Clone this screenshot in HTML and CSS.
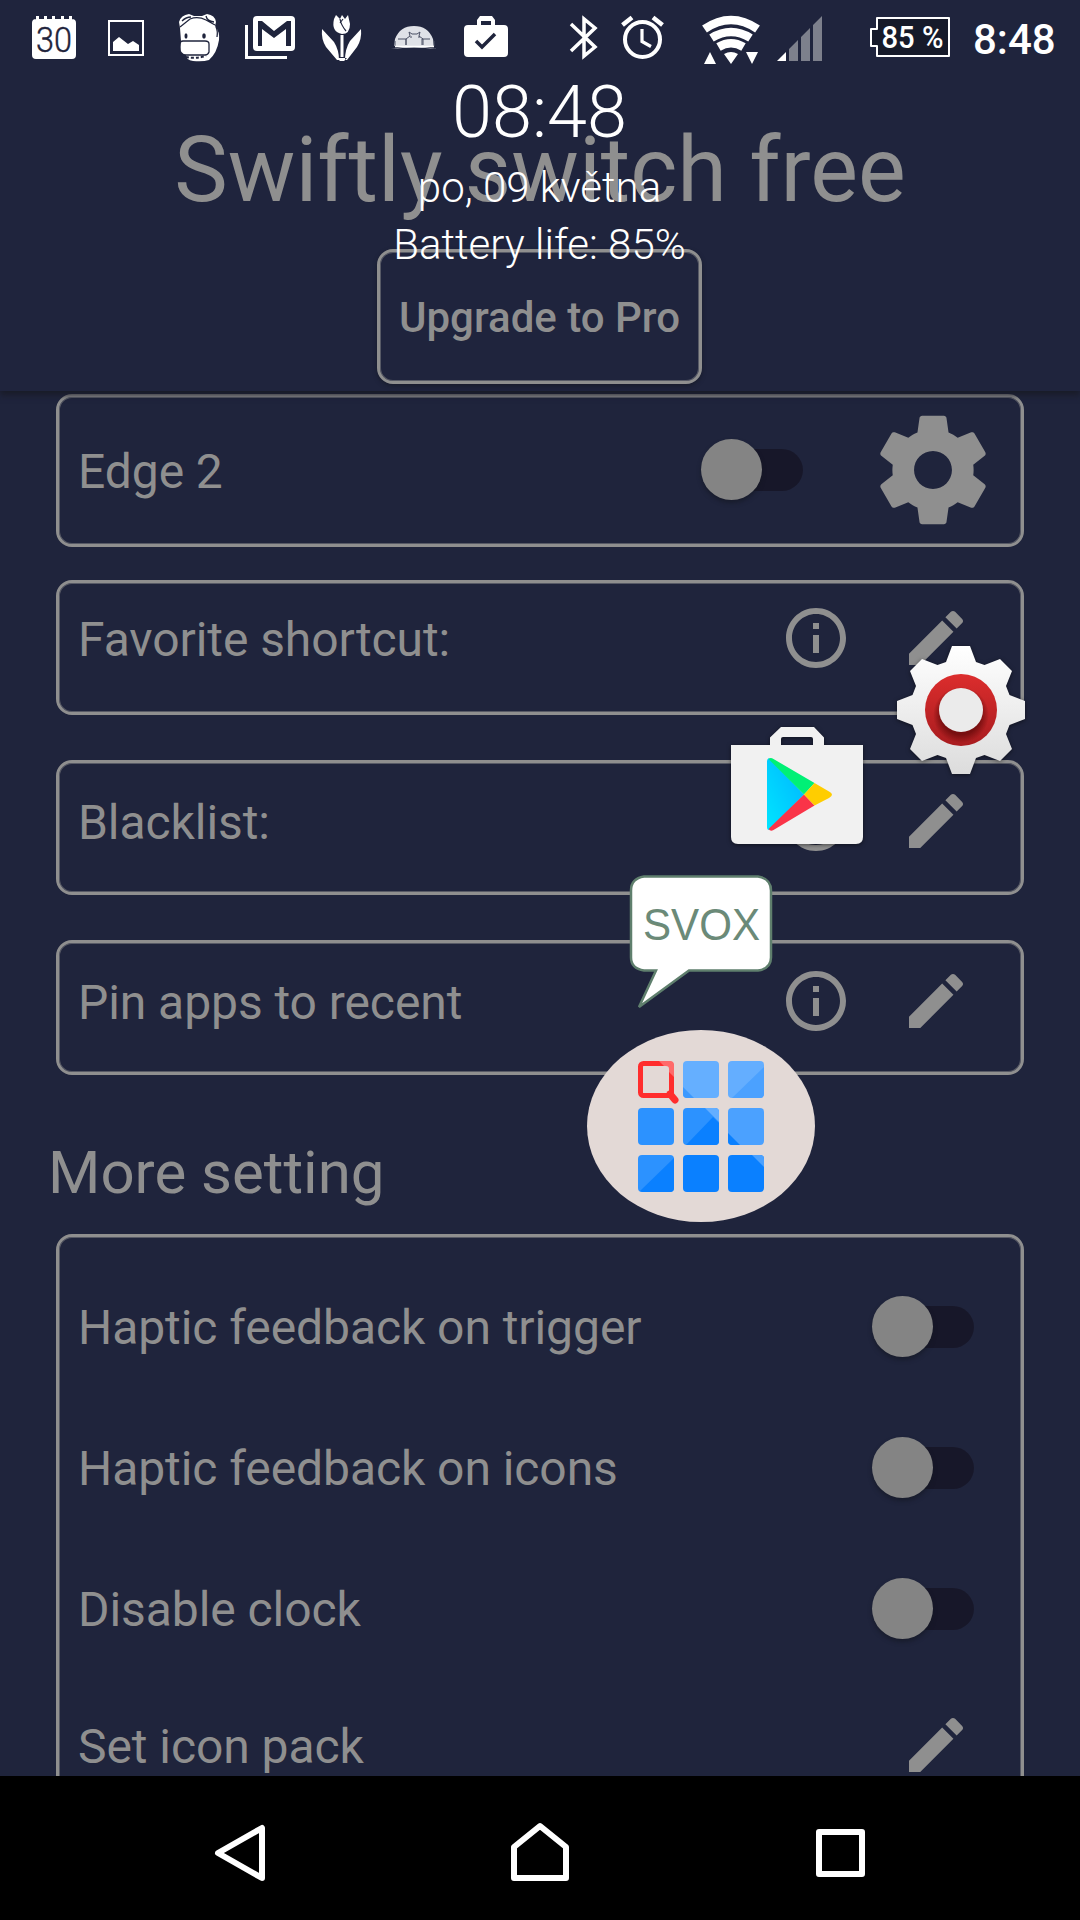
FILE: index.html
```html
<!DOCTYPE html>
<html lang="en">
<head>
    <meta charset="UTF-8">
    <meta name="viewport" content="width=device-width, initial-scale=1.0">
    <title>Swiftly switch free</title>
    <link rel="stylesheet" href="styles.css">
</head>
<body>
    <!-- shared icons -->
    <svg class="sprite" width="0" height="0">
        <symbol id="info" viewBox="0 0 24 24">
            <path d="M11 17h2v-6h-2v6zm1-15C6.48 2 2 6.48 2 12s4.48 10 10 10 10-4.48 10-10S17.52 2 12 2zm0 18c-4.41 0-8-3.59-8-8s3.59-8 8-8 8 3.59 8 8-3.59 8-8 8zM11 9h2V7h-2v2z"/>
        </symbol>
        <symbol id="pencil" viewBox="0 0 24 24">
            <path d="M3 17.25V21h3.75L17.81 9.94l-3.75-3.75L3 17.25zM20.71 7.04c.39-.39.39-1.02 0-1.41l-2.34-2.34c-.39-.39-1.02-.39-1.41 0l-1.83 1.83 3.75 3.75 1.83-1.83z"/>
        </symbol>
    </svg>

    <header class="app-header">
        <div class="status-bar">
            <div class="notifications">
                <svg width="72" height="76" viewBox="0 0 72 76">
                    <path fill="#fff" d="M18 19h36q4 0 4 4v32q0 4-4 4H18q-4 0-4-4V23q0-4 4-4zM18 16h3v4h-3zM26 16h3v4h-3zM34 16h3v4h-3zM43 16h3v4h-3zM51 16h3v4h-3z"/>
                    <text class="cal-day" x="18" y="52" textLength="36" lengthAdjust="spacingAndGlyphs">30</text>
                </svg>
                <svg width="72" height="76" viewBox="0 0 72 76">
                    <path fill="none" stroke="#fff" stroke-width="2" d="M19 21h34v34H19z"/>
                    <path fill="#fff" d="M23 51V42l6-5 9 7 5-3 6 4v6z"/>
                </svg>
                <svg width="72" height="76" viewBox="0 0 72 76">
                    <path fill="#fff" d="M18 28l-1-6q2-7 10-8l5 2h8l5-2q8 1 9 8l-1 4q5 6 4 14-2 13-10 20-6 2-16 1-7-1-7-6-6-2-6-8l1-6z"/>
                    <path fill="none" stroke="#1f243c" stroke-width="1.3" d="M18 27l10-8q8-3 16 1l9 5M20 21q4-4 9-4M44 16q1 5 8 6M54 27q2 4 1 10"/>
                    <ellipse cx="24" cy="36" rx="1.500" ry="2.800" fill="#1f243c"/>
                    <ellipse cx="42" cy="36" rx="1.800" ry="2.800" fill="#1f243c"/>
                    <path fill="none" stroke="#1f243c" stroke-width="1.300" d="M21 41h22q4 0 4 3v8q-1 3-4 3H21q-3 0-3-4v-7q0-3 3-3z"/>
                    <path fill="none" stroke="#1f243c" stroke-width="2" stroke-dasharray="3 2" d="M24 57q9 2 20-1"/>
                </svg>
                <svg width="72" height="76" viewBox="0 0 72 76">
                    <path fill="none" stroke="#fff" stroke-width="3" d="M12.500 25v32.500H53"/>
                    <rect x="19" y="16" width="42" height="35" rx="4" fill="#fff"/>
                    <path fill="#1f243c" d="M24 21h4l12 10 13-10h4v25h-5V29L40 38 28 29v17h-4z"/>
                </svg>
                <svg width="72" height="76" viewBox="0 0 72 76">
                    <path fill="#fff" d="M28 19l2-4 4 4 2-4 3 4 3-4 2 9q0 10-8 10-11-2-8-15zM16 29l12 13q5 8 5 18h-2L20 47q-5-8-4-18zM55 29L44 41q-5 8-5 19h2l10-13q5-8 4-18zM34.500 35h3v22h-3zM31 58h10l-3 3h-4z"/>
                    <path fill="none" stroke="#1f243c" stroke-width="1.200" d="M34 19q1 6 6 12M37 19l-3 4"/>
                </svg>
                <svg width="72" height="76" viewBox="0 0 72 76">
                    <path fill="#dfe1e7" d="M17 39Q22 26 36 26t19 13l1 7H16zM13 49q23-5 46 0-23-3-46 0z"/>
                    <path fill="none" stroke="#4b5065" stroke-width="1" d="M28 45v-6l4-3-1-4 3 2h5l3-2-1 4 4 3v6M20 39h8v6M52 39h-8v6M17 41v5M56 41v5M32 37h2M40 37h2"/>
                    <path stroke="#fff" stroke-width="1.500" d="M17 46.500h39"/>
                </svg>
                <svg width="72" height="76" viewBox="0 0 72 76">
                    <path fill="#fff" fill-rule="evenodd" d="M30 16h12l3 4v5h9q4 0 4 4v24q0 4-4 4H18q-4 0-4-4V29q0-4 4-4h9v-5zM31 21v4h10v-4z"/>
                    <path fill="none" stroke="#1f243c" stroke-width="3.500" d="M26 41l6 6 13-13"/>
                </svg>
            </div>
            <div class="system">
                <svg width="60" height="76" viewBox="0 0 60 76">
                    <path fill="none" stroke="#fff" stroke-width="3.500" d="M17 24l24 23-11 9V19l11 9L17 51"/>
                </svg>
                <svg width="80" height="76" viewBox="0 0 80 76">
                    <circle cx="28.500" cy="39.500" r="17.500" fill="none" stroke="#fff" stroke-width="4"/>
                    <path fill="none" stroke="#fff" stroke-width="3.200" d="M28 29v12.500l9 5"/>
                    <path fill="none" stroke="#fff" stroke-width="4.500" d="M8.500 25l9.500-7.500M39 17.500l9.500 7.500"/>
                </svg>
                <svg width="74" height="76" viewBox="0 0 74 76">
                    <g fill="none" stroke="#fff" stroke-width="8.500">
                        <path d="M10.500 29Q37 11 63.500 29"/>
                        <path d="M17.500 38Q37 26 56.500 38"/>
                        <path d="M24.500 47Q37 39.500 49.500 47"/>
                    </g>
                    <path fill="#fff" d="M30 54q7-4 14 0l-7 10zM16 52l6 12H10zM52 52h12l-6 12z"/>
                </svg>
                <svg width="93" height="76" viewBox="0 0 93 76">
                    <path fill="#fff" d="M9 61l9-9v9z"/>
                    <path fill="#7d808c" d="M21 49l9-9v21h-9zM33 37l9-9v33h-9zM45 25l9-9v45h-9z"/>
                </svg>
                <svg width="107" height="76" viewBox="0 0 107 76">
                    <path fill="#161a2a" stroke="#fff" stroke-width="2" stroke-linejoin="round" d="M16 18h72v38H16V46h-6V29h6z"/>
                    <text class="battery-text" x="20.500" y="48" textLength="62" lengthAdjust="spacingAndGlyphs">85 %</text>
                </svg>
                <span class="time">8:48</span>
            </div>
        </div>
        <h1 class="title">Swiftly switch free</h1>
        <button class="upgrade">Upgrade to Pro</button>
    </header>

    <main class="content">
        <div class="card card-edge">
            <span class="label">Edge 2</span>
            <span class="toggle"></span>
            <svg class="gear" viewBox="0 0 24 24"><path d="M19.430 12.980c.04-.32.07-.64.07-.98s-.03-.66-.07-.98l2.110-1.650c.19-.15.24-.42.12-.64l-2-3.460c-.12-.22-.39-.3-.61-.22l-2.490 1c-.52-.4-1.080-.73-1.690-.98l-.38-2.650C14.460 2.180 14.250 2 14 2h-4c-.25 0-.46.18-.49.42l-.38 2.650c-.61.25-1.170.59-1.690.98l-2.490-1c-.23-.09-.49 0-.61.22l-2 3.460c-.13.22-.07.49.12.64l2.110 1.650c-.04.32-.07.65-.07.98s.03.66.07.98l-2.110 1.650c-.19.15-.24.42-.12.64l2 3.460c.12.22.39.3.61.22l2.490-1c.52.4 1.080.73 1.690.98l.38 2.650c.03.24.24.42.49.42h4c.25 0 .46-.18.49-.42l.38-2.650c.61-.25 1.170-.59 1.690-.98l2.490 1c.23.09.49 0 .61-.22l2-3.460c.12-.22.07-.49-.12-.64l-2.110-1.650zM12 15.500c-1.930 0-3.500-1.570-3.500-3.500s1.570-3.500 3.500-3.500 3.500 1.570 3.500 3.500-1.570 3.500-3.500 3.500z"/></svg>
        </div>
        <div class="card card-favorite">
            <span class="label">Favorite shortcut:</span>
            <svg class="icon"><use href="#info"/></svg>
            <svg class="icon"><use href="#pencil"/></svg>
        </div>
        <div class="card">
            <span class="label">Blacklist:</span>
            <svg class="icon"><use href="#info"/></svg>
            <svg class="icon"><use href="#pencil"/></svg>
        </div>
        <div class="card">
            <span class="label">Pin apps to recent</span>
            <svg class="icon"><use href="#info"/></svg>
            <svg class="icon"><use href="#pencil"/></svg>
        </div>
        <h2 class="section-title">More setting</h2>
        <div class="settings">
            <div class="row"><span class="label">Haptic feedback on trigger</span><span class="toggle"></span></div>
            <div class="row"><span class="label">Haptic feedback on icons</span><span class="toggle"></span></div>
            <div class="row"><span class="label">Disable clock</span><span class="toggle"></span></div>
            <div class="row row-last"><span class="label">Set icon pack</span><svg class="icon"><use href="#pencil"/></svg></div>
        </div>
    </main>

    <nav class="nav-bar">
        <svg width="60" height="96" viewBox="0 0 60 96"><path d="M52 28v50L8 53z"/></svg>
        <svg width="60" height="96" viewBox="0 0 60 96"><path d="M4 78V47l26-21 26 21v31z"/></svg>
        <svg width="60" height="96" viewBox="0 0 60 96"><path d="M9 32h43v42H9z"/></svg>
    </nav>

    <!-- edge overlay: clock and floating shortcuts -->
    <div class="clock">
        <div class="clock-time">08:48</div>
        <div class="clock-date">po, 09 května</div>
        <div class="clock-battery">Battery life: 85%</div>
    </div>

    <svg class="shortcut settings-app" viewBox="0 0 128 128">
        <defs>
            <linearGradient id="gearFill" x1="0" y1="0" x2="0" y2="1"><stop offset="0" stop-color="#fff"/><stop offset="1" stop-color="#dcdcdc"/></linearGradient>
            <linearGradient id="ringFill" x1="0" y1="0" x2="0" y2="1"><stop offset="0" stop-color="#dc2d2d"/><stop offset="1" stop-color="#a81c1f"/></linearGradient>
            <radialGradient id="ringShade"><stop offset=".7" stop-color="#780f10"/><stop offset="1" stop-color="#780f10" stop-opacity="0"/></radialGradient>
        </defs>
        <path fill="url(#gearFill)" d="M55 0h18l6 16 8.500 3L103 13l12 12-6 15 3.500 9 15.500 6v18l-15.500 6-3.500 9 6 15-12 12-15.500-6-8.500 3-6 16H55l-6-16-8.500-3L25 115l-12-12 6-15-3.500-9L0 73V55l15.500-6 3.500-9-6-15 12-12 15.500 6 8.500-3z"/>
        <circle cx="64" cy="64" r="36" fill="url(#ringFill)"/>
        <circle cx="64" cy="69" r="28" fill="url(#ringShade)"/>
        <circle cx="64" cy="64" r="22" fill="#ebebeb"/>
    </svg>

    <svg class="shortcut play-store" viewBox="0 0 132 117">
        <defs>
            <linearGradient id="playBlue" x1="1" y1="0" x2="0" y2="1"><stop offset="0" stop-color="#00b4ff"/><stop offset="1" stop-color="#00e5ff"/></linearGradient>
        </defs>
        <path fill="#f1f1f1" fill-rule="evenodd" d="M0 18h39v-7.500L50 0h33l10 10.500V18h39v92q0 7-7 7H7q-7 0-7-7zM50 18h32v-6q0-2-2-2H52q-2 0-2 2z"/>
        <path fill="url(#playBlue)" d="M36 34q0-2 2-3l35 36.500L38 103q-2 0-2-3z"/>
        <path fill="#00f076" d="M37.500 32q2-2 5 0l41 24L73 67.500z"/>
        <path fill="#fa3448" d="M37.500 102q2 3 5 1l41-24.500L73 67.500z"/>
        <path fill="#ffcd00" d="M83.500 56L98 64.500q6 3 0 6.500l-14.500 7.500L73 67.500z"/>
    </svg>

    <svg class="shortcut svox" viewBox="0 0 144 136">
        <path fill="#fff" stroke="#5f7f6d" stroke-width="2.500" d="M15 1.500h114q13 2 13 14v67q0 11-13 13H60L10 132l17-36.500H15q-13-2-13-13v-67q0-12 13-14z"/>
        <text class="svox-text" x="14" y="64.500" textLength="117" lengthAdjust="spacingAndGlyphs">SVOX</text>
    </svg>

    <div class="shortcut drawer">
        <svg width="130" height="134" viewBox="0 0 130 134">
            <rect x="2.500" y="2.500" width="31" height="32" rx="3" fill="none" stroke="#ff2d2d" stroke-width="5"/>
            <path fill="#ff6a6a" d="M21 0h11q4 0 4 4v12l-5-5V8q0-3-3-3h-2z"/>
            <path stroke="#ff2d2d" stroke-width="7" stroke-linecap="round" d="M32 33l5 6"/>
            <rect x="45" width="36" height="37" rx="4" fill="#65afff"/>
            <path fill="#3c99ff" d="M45 26l11 11h-7q-4 0-4-4z"/>
            <rect x="90" width="36" height="37" rx="4" fill="#64aeff"/>
            <path fill="#4ba1ff" d="M126 6v27q0 4-4 4H94z"/>
            <rect y="47" width="36" height="37" rx="4" fill="#2c92ff"/>
            <rect x="45" y="47" width="36" height="37" rx="4" fill="#2c92ff"/>
            <path fill="#0a80ff" d="M75 56l6 6v18q0 4-4 4H48z"/>
            <path fill="#64aeff" d="M67 47h10q4 0 4 4v10z"/>
            <rect x="90" y="47" width="36" height="37" rx="4" fill="#4ba1ff"/>
            <path fill="#0a80ff" d="M90 72l12 12h-8q-4 0-4-4z"/>
            <rect y="94" width="36" height="37" rx="4" fill="#2c92ff"/>
            <path fill="#0a80ff" d="M36 97v30q0 4-4 4H4l-2-1z"/>
            <rect x="45" y="94" width="36" height="37" rx="4" fill="#0a80ff"/>
            <rect x="90" y="94" width="36" height="37" rx="4" fill="#0a80ff"/>
            <path fill="#4ba1ff" d="M114 94h8q4 0 4 4v8z"/>
        </svg>
    </div>
</body>
</html>
```
FILE: styles.css
```css
* {
    box-sizing: border-box;
}
body {
    position: relative;
    display: flex;
    flex-direction: column;
    width: 1080px;
    height: 1920px;
    margin: 0;
    overflow: hidden;
    background-color: #1f243c;
    color: #8f8f8f;
    font-family: Roboto, sans-serif;
}
svg {
    display: block;
    flex: none;
}
.sprite {
    position: absolute;
}

/* header */
.app-header {
    position: relative;
    z-index: 1;
    flex: none;
    display: flex;
    flex-direction: column;
    align-items: center;
    height: 391px;
    background-color: #1f243d;
    box-shadow: 0 4px 6px rgba(24, 27, 38, 0.9);
}
.status-bar {
    display: flex;
    width: 100%;
    height: 76px;
    padding-left: 18px;
    color: #fff;
}
.notifications {
    display: flex;
    width: 536px;
}
.system {
    display: flex;
}
.cal-day {
    font-size: 35px;
    font-weight: 300;
    fill: #1f243c;
    stroke: #1f243c;
    stroke-width: 0.4px;
}
.battery-text {
    font-size: 31px;
    font-weight: 500;
    fill: #fff;
}
.time {
    margin-left: 5px;
    font-size: 42px;
    font-weight: 500;
    line-height: 80px;
}
.title {
    margin: 45px 0 28px;
    font-size: 90px;
    font-weight: 400;
    line-height: 100px;
}
.upgrade {
    width: 325px;
    height: 135px;
    margin-right: 1px;
    padding: 1px 0 0;
    border: 3px solid #8f8f8f;
    border-radius: 16px;
    background: none;
    box-shadow: inset 0 0 0 1px rgba(143, 143, 143, 0.5), 0 2px 4px rgba(20, 24, 34, 0.6);
    color: inherit;
    font-family: inherit;
    font-size: 42px;
    font-weight: 500;
}

/* list */
.content {
    height: 1385px;
    padding: 3px 56px 0;
    overflow: hidden;
}
.card,
.settings {
    border: 3px solid #8f8f8f;
    border-radius: 16px;
    box-shadow: inset 0 0 0 1px rgba(143, 143, 143, 0.5);
}
.card {
    display: flex;
    align-items: center;
    gap: 48px;
    height: 135px;
    margin-bottom: 45px;
    padding: 0 49px 13px 19px;
}
.card-edge {
    height: 153px;
    gap: 65px;
    margin-bottom: 33px;
    padding: 0 23px 2px 19px;
}
.card-favorite {
    padding-bottom: 19px;
}
.label {
    flex: 1;
    padding-top: 3px;
    font-size: 48px;
    letter-spacing: -0.07px;
    line-height: 56px;
    white-space: nowrap;
}
.card-edge .label {
    padding-top: 5px;
}
.icon {
    width: 72px;
    height: 72px;
    fill: #8f8f8f;
}
.gear {
    width: 130px;
    height: 130px;
    fill: #8f8f8f;
}
.toggle {
    position: relative;
    width: 102px;
    height: 42px;
    border-radius: 21px;
    background: linear-gradient(90deg, transparent 30px, #171729 30px);
}
.toggle::before {
    content: "";
    position: absolute;
    top: -10px;
    left: 0;
    width: 61px;
    height: 61px;
    border-radius: 50%;
    background-color: #848484;
    box-shadow: 0 3px 4px rgba(20, 24, 34, 0.6);
}
.section-title {
    margin: 58px 0 21px -8px;
    font-size: 60px;
    font-weight: 400;
    line-height: 80px;
}
.settings {
    height: 600px;
    padding: 19px 47px 0 19px;
}
.row {
    display: flex;
    align-items: center;
    height: 141px;
}
.row-last {
    height: 132px;
    padding-right: 2px;
}

/* navigation */
.nav-bar {
    position: relative;
    z-index: 1;
    flex: none;
    display: flex;
    align-items: center;
    justify-content: space-between;
    height: 144px;
    padding: 0 210px;
    background-color: #000;
}
.nav-bar path {
    fill: none;
    stroke: #fff;
    stroke-width: 6;
    stroke-linejoin: round;
}

/* overlay */
.clock {
    position: absolute;
    z-index: 2;
    top: 73px;
    left: 0;
    width: 1079px;
    color: #fff;
    font-weight: 300;
    text-align: center;
}
.clock-time {
    font-size: 72px;
    line-height: 80px;
}
.clock-date,
.clock-battery {
    font-size: 42px;
    line-height: 57px;
}
.clock-date {
    padding-top: 6px;
}
.shortcut {
    position: absolute;
    z-index: 2;
    overflow: visible;
}
.settings-app {
    top: 646px;
    left: 897px;
    width: 128px;
    height: 128px;
    filter: drop-shadow(0 1px 2px rgba(0, 0, 0, 0.5));
}
.play-store {
    top: 727px;
    left: 731px;
    width: 132px;
    height: 117px;
    filter: drop-shadow(0 1px 2px rgba(0, 0, 0, 0.5));
}
.svox {
    top: 875px;
    left: 629px;
    width: 144px;
    height: 136px;
}
.svox-text {
    font-family: "Liberation Sans", sans-serif;
    font-size: 44px;
    fill: #6b8a78;
}
.drawer {
    top: 1030px;
    left: 587px;
    width: 228px;
    height: 192px;
    padding: 31px 0 0 51px;
    border-radius: 50%;
    background-color: #e3d9d6;
}
```
